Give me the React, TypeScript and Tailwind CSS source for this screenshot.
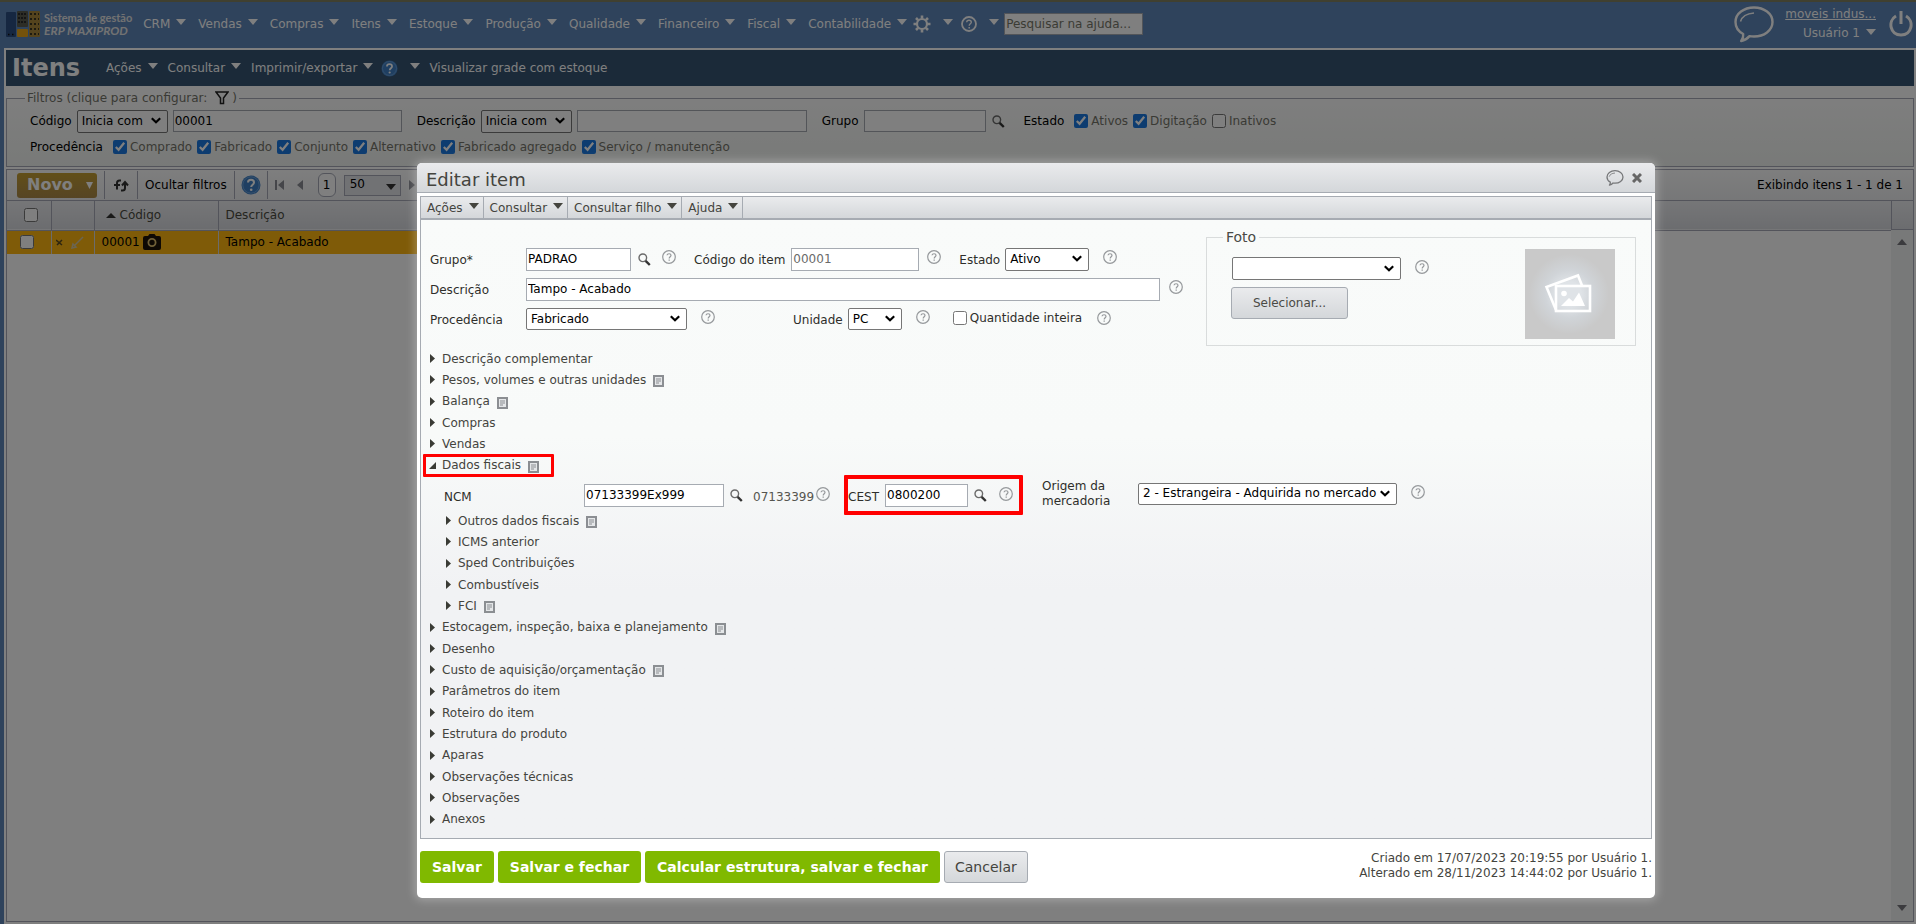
import clsx from 'clsx';

const MENU = [
  'CRM',
  'Vendas',
  'Compras',
  'Itens',
  'Estoque',
  'Produção',
  'Qualidade',
  'Financeiro',
  'Fiscal',
  'Contabilidade',
];

const ORIGINS = [
  'Comprado',
  'Fabricado',
  'Conjunto',
  'Alternativo',
  'Fabricado agregado',
  'Serviço / manutenção',
];

const SECTIONS = [
  { label: 'Descrição complementar' },
  { label: 'Pesos, volumes e outras unidades', note: true },
  { label: 'Balança', note: true },
  { label: 'Compras' },
  { label: 'Vendas' },
  { label: 'Dados fiscais', note: true, open: true },
];

const MORE_SECTIONS = [
  { label: 'Outros dados fiscais', note: true, sub: true },
  { label: 'ICMS anterior', sub: true },
  { label: 'Sped Contribuições', sub: true },
  { label: 'Combustíveis', sub: true },
  { label: 'FCI', note: true, sub: true },
  { label: 'Estocagem, inspeção, baixa e planejamento', note: true },
  { label: 'Desenho' },
  { label: 'Custo de aquisição/orçamentação', note: true },
  { label: 'Parâmetros do item' },
  { label: 'Roteiro do item' },
  { label: 'Estrutura do produto' },
  { label: 'Aparas' },
  { label: 'Observações técnicas' },
  { label: 'Observações' },
  { label: 'Anexos' },
];

const inputClass =
  'bg-white border border-[#a6abb2] px-[1px] pb-[1px] text-black';

function Caret({ className = '' }) {
  return (
    <svg
      viewBox="0 0 10 6"
      className={clsx('w-[10px] h-[6px] shrink-0 mb-1', className)}
      fill="currentColor"
    >
      <path d="M0 0h10L5 6z" />
    </svg>
  );
}

function Search({ className = '' }) {
  return (
    <svg
      viewBox="0 0 13 13"
      className={clsx('w-[13px] h-[13px] shrink-0', className)}
      fill="none"
    >
      <circle cx="4.8" cy="4.8" r="3.8" stroke="#6a6a6a" strokeWidth="1.4" />
      <path d="M7.6 7.8l4.2 4.2" stroke="#333" strokeWidth="2.4" />
    </svg>
  );
}

function Help({ className = '' }) {
  return (
    <svg
      viewBox="0 0 14 14"
      className={clsx('w-[14px] h-[14px] shrink-0', className)}
      fill="none"
      stroke="#96999c"
    >
      <circle cx="7" cy="7" r="6.3" strokeWidth="1.2" />
      <path d="M5 5.3C5.2 3.2 9 3.2 9 5.3 9 6.7 7.2 6.8 7.2 8.5" strokeWidth="1.2" />
      <path d="M7.2 9.6v1.2" strokeWidth="1.3" />
    </svg>
  );
}

function BlueHelp({ className = '' }) {
  return (
    <svg viewBox="0 0 20 20" className={clsx('shrink-0', className)}>
      <circle cx="10" cy="10" r="9.5" fill="#3f7fc4" />
      <circle cx="10" cy="10" r="8.2" fill="none" stroke="#6fa3da" />
      <path
        d="M7 7.6C7 3.9 13 4 13 7.5c0 2.3-2.8 2.2-2.8 4.6"
        fill="none"
        stroke="#fff"
        strokeWidth="2"
      />
      <circle cx="10.2" cy="14.7" r="1.3" fill="#fff" />
    </svg>
  );
}

function Bubble({ className = '', stroke = 1.6 }) {
  return (
    <svg
      viewBox="0 0 40 37"
      className={clsx('shrink-0', className)}
      fill="none"
      stroke="currentColor"
      strokeWidth={stroke}
      strokeLinejoin="round"
    >
      <path d="M20 1.5C30 1.5 38.5 7.5 38.5 16S30 30.5 20 30.5c-1.5 0-3-.1-4.5-.4C13 33 10 34.5 7.2 35c1.5-2 2.3-4.5 2-7C4.5 25.5 1.5 21 1.5 16 1.5 7.5 10 1.5 20 1.5z" />
      <path d="M6.5 15.5C8 10.5 13 7.5 20 7" strokeWidth={stroke * 0.65} />
    </svg>
  );
}

function Note() {
  return (
    <svg
      viewBox="0 0 11 12"
      className="w-[11px] h-[12px] ml-[7px] mt-[3px] shrink-0"
      fill="#e4e6e8"
      stroke="#8b8e92"
    >
      <rect x="1" y="1" width="9" height="10" strokeWidth="2" />
      <path d="M3 4h5M3 6h5M3 8h3" strokeWidth="1" />
    </svg>
  );
}

function Logo() {
  return (
    <svg viewBox="0 0 34 26" className="w-[34px] h-[26px] shrink-0">
      <rect x="0" y="1" width="10" height="25" rx="1" fill="#2c4f82" />
      <path d="M2 23.5h1.5M6 23.5h1.5" stroke="#111" strokeWidth="1.5" />
      <rect x="11" y="0" width="11" height="16" rx="1" fill="#5a5a4c" />
      <path
        d="M12 3h9M12 7h9M12 11h9"
        stroke="#2b2b2b"
        strokeWidth="2"
        strokeDasharray="2 1"
      />
      <rect x="11" y="18" width="11" height="8" rx="1" fill="#e8a516" />
      <rect x="23" y="0" width="11" height="26" rx="1" fill="#a8873a" />
      <path
        d="M24 3h9M24 8h9M24 13h9M24 18h9M24 23h9"
        stroke="#3b3420"
        strokeWidth="2"
        strokeDasharray="2 2"
      />
    </svg>
  );
}

function Select({ id = undefined, label = undefined, option = '', className = '' }) {
  return (
    <span className={clsx('relative block shrink-0', className)}>
      <select
        id={id}
        aria-label={label}
        className="appearance-none block w-full h-full bg-white border border-[#767676] rounded-[2px] pl-[4px] pr-[17px] pb-[1px] text-black"
      >
        <option>{option}</option>
      </select>
      <svg
        viewBox="0 0 10 7"
        className="absolute right-[7px] top-1/2 -mt-[4px] w-[10px] h-[7px] pointer-events-none"
        fill="none"
        stroke="#000"
        strokeWidth="2.2"
      >
        <path d="M.8 1.2L5 5.200l4.200-4" />
      </svg>
    </span>
  );
}

function Check({ id, label, checked = false, className = '' }) {
  return (
    <span className={clsx('flex items-center', className)}>
      <input
        id={id}
        type="checkbox"
        defaultChecked={checked}
        className="w-[14px] h-[14px] mr-[3px] accent-[#1a78e0]"
      />
      <label htmlFor={id}>{label}</label>
    </span>
  );
}

function TopBar() {
  return (
    <header className="h-[46px] flex items-center pb-[2px] pl-[6px] pr-[3px] text-white">
      <Logo />
      <div className="ml-[4px] font-['Lato',sans-serif] font-bold leading-[13px] whitespace-nowrap text-[#e4e4e4]">
        <div className="text-[11px]">Sistema de gestão</div>
        <div className="text-[12px] italic">ERP MAXIPROD</div>
      </div>
      <nav className="flex items-center gap-[12px] ml-[11px]">
        {MENU.map((name) => (
          <button key={name} type="button" className="flex items-center gap-[6px]">
            {name} <Caret />
          </button>
        ))}
      </nav>
      <button type="button" aria-label="Configurações" className="flex items-center gap-[12px] ml-[6px]">
        <svg viewBox="0 0 18 18" className="w-[18px] h-[18px]" fill="none" stroke="#fff">
          <circle cx="9" cy="9" r="5" strokeWidth="2.2" />
          <path
            d="M9 .5v3M9 14.5v3M.5 9h3M14.5 9h3M3 3l2.1 2.1M12.9 12.9L15 15M15 3l-2.1 2.1M5.1 12.9L3 15"
            strokeWidth="2.6"
          />
        </svg>
        <Caret />
      </button>
      <button type="button" aria-label="Ajuda" className="flex items-center gap-[12px] ml-[8px]">
        <svg viewBox="0 0 16 16" className="w-[16px] h-[16px]" fill="none" stroke="#fff">
          <circle cx="8" cy="8" r="7" strokeWidth="1.8" />
          <path d="M5.7 6.2C5.8 3.5 10.3 3.6 10.3 6.2 10.3 7.8 8.2 7.9 8.2 9.8" strokeWidth="1.4" />
          <path d="M8.2 11v1.5" strokeWidth="1.5" />
        </svg>
        <Caret />
      </button>
      <input
        aria-label="Pesquisar na ajuda"
        placeholder="Pesquisar na ajuda..."
        className="ml-[5px] w-[139px] h-[22px] bg-white border border-[#a6abb2] px-[1px] placeholder:text-[#77776a]"
      />
      <div className="ml-auto flex items-center">
        <Bubble className="w-[40px] h-[37px]" stroke={2.4} />
        <div className="ml-[11px] text-right leading-[19px]">
          <a href="#empresa" className="underline block">
            moveis indus...
          </a>
          <button type="button" className="inline-flex items-center gap-[6px]">
            Usuário 1 <Caret />
          </button>
        </div>
        <button type="button" aria-label="Sair" className="ml-[13px]">
          <svg viewBox="0 0 24 26" className="w-[24px] h-[26px]" fill="none" stroke="#fff" strokeWidth="3">
            <path d="M12 0v13" />
            <path d="M7 5C-1.5 10 1 24 12 24s13.5-14 5-19" />
          </svg>
        </button>
      </div>
    </header>
  );
}

function TitleBar() {
  return (
    <div className="h-[36px] bg-[#365472] text-white flex items-center pl-[6px]">
      <h1 className="text-[24px] font-bold w-[94px]">Itens</h1>
      <nav className="flex items-center gap-[10px]">
        {['Ações', 'Consultar', 'Imprimir/exportar'].map((name) => (
          <button key={name} type="button" className="flex items-center gap-[6px]">
            {name} <Caret />
          </button>
        ))}
      </nav>
      <button type="button" aria-label="Ajuda" className="flex items-center gap-[12px] ml-[8px] mr-[9px]">
        <BlueHelp className="w-[17px] h-[17px]" />
        <Caret />
      </button>
      <a href="#estoque">Visualizar grade com estoque</a>
    </div>
  );
}

function Filters() {
  return (
    <fieldset className="mt-[4px] border border-[#a6a9b6] pl-[23px] pt-[2px] pb-[6px] bg-linear-to-b from-[#fdfdfd] to-[#f1f4f1] text-[#74746a]">
      <legend className="-ml-[5px] h-[16px] px-[2px] flex items-center">
        Filtros (clique para configurar:
        <svg viewBox="0 0 14 14" className="w-[14px] h-[14px] ml-[8px] mr-[3px]" fill="none" stroke="#222" strokeWidth="1.5">
          <path d="M1 1h12L8.5 7v5.5h-3V7z" />
        </svg>
        )
      </legend>
      <div className="h-[26px] flex items-center">
        <label htmlFor="codigo" className="text-black">Código</label>
        <Select label="Operador do código" option="Inicia com" className="ml-[5px] w-[91px] h-[23px]" />
        <input id="codigo" defaultValue="00001" className={clsx(inputClass, 'ml-[5px] w-[229px] h-[22px]')} />
        <label htmlFor="descricao" className="text-black ml-[15px]">Descrição</label>
        <Select label="Operador da descrição" option="Inicia com" className="ml-[5px] w-[91px] h-[23px]" />
        <input id="descricao" className={clsx(inputClass, 'ml-[5px] w-[230px] h-[22px]')} />
        <label htmlFor="grupo" className="text-black ml-[15px]">Grupo</label>
        <input id="grupo" className={clsx(inputClass, 'ml-[6px] w-[122px] h-[22px]')} />
        <Search className="ml-[6px]" />
        <span className="text-black ml-[18px] mr-[10px]">Estado</span>
        <div className="flex gap-[5px]">
          <Check id="ativos" label="Ativos" checked />
          <Check id="digitacao" label="Digitação" checked />
          <Check id="inativos" label="Inativos" />
        </div>
      </div>
      <div className="h-[26px] flex items-center gap-[5px]">
        <span className="text-black mr-[5px]">Procedência</span>
        {ORIGINS.map((name) => (
          <Check key={name} id={`origem-${name}`} label={name} checked />
        ))}
      </div>
    </fieldset>
  );
}

function Grid() {
  return (
    <section className="mt-[2px] flex-1 flex flex-col border border-[#a6a9b6]">
      <div className="h-[31px] flex items-center pl-[10px] pr-[10px] border-b border-[#a6a9b6] bg-linear-to-b from-[#fdfdfd] to-[#eeeff1]">
        <button
          type="button"
          className="w-[80px] h-[25px] rounded-[3px] bg-linear-to-b from-[#c49e30] to-[#ac8a48] text-white text-[16px] font-bold flex items-center pl-[10px] gap-[13px]"
        >
          Novo
          <svg viewBox="0 0 7 7" className="w-[7px] h-[7px]" fill="currentColor">
            <path d="M0 0h7L3.5 7z" />
          </svg>
        </button>
        <div className="h-[28px] ml-[7px] px-[8px] border-x border-[#a6a9b6] flex items-center">
          <button type="button" aria-label="Atualizar">
            <svg viewBox="0 0 16 13" className="w-[16px] h-[13px] block" fill="none" stroke="#333" strokeWidth="2">
              <path d="M8 1.500H6.500Q4 1.500 4 4v6.500" />
              <path d="M8 11.500h1.500Q12 11.500 12 9V3.500" />
              <path d="M1 6h6M9 6.500l3-3.500 3 3.500" />
            </svg>
          </button>
        </div>
        <button type="button" className="px-[7px] text-black">Ocultar filtros</button>
        <div className="h-[28px] px-[6px] border-x border-[#a6a9b6] flex items-center">
          <BlueHelp className="w-[20px] h-[20px]" />
        </div>
        <div className="flex items-center ml-[7px] text-[#8a8d94]">
          <svg viewBox="0 0 9 10" className="w-[9px] h-[10px]" fill="currentColor">
            <path d="M0 0h2v10H0zM9 0v10L3 5z" />
          </svg>
          <svg viewBox="0 0 6 10" className="w-[6px] h-[10px] ml-[13px]" fill="currentColor">
            <path d="M6 0v10L0 5z" />
          </svg>
          <span className="ml-[15px] w-[18px] h-[24px] rounded-[6px] border border-[#a6a9b6] bg-white text-black flex items-center justify-center">
            1
          </span>
          <span className="relative ml-[8px]">
            <select aria-label="Itens por página" className="appearance-none w-[57px] h-[21px] pl-[5px] pb-[2px] bg-[#e3e4e8] border border-[#a6a9b6] text-black block">
              <option>50</option>
            </select>
            <Caret className="absolute right-[5px] top-[9px] text-[#333]" />
          </span>
          <svg viewBox="0 0 6 10" className="w-[6px] h-[10px] ml-[8px]" fill="currentColor">
            <path d="M0 0v10l6-5z" />
          </svg>
        </div>
        <span className="ml-auto text-black">Exibindo itens 1 - 1 de 1</span>
      </div>
      <div className="flex-1 flex">
        <div className="flex-1">
          <table className="w-full table-fixed border-collapse text-left">
            <colgroup>
              <col className="w-[44px]" />
              <col className="w-[43px]" />
              <col className="w-[124px]" />
              <col className="w-[700px]" />
              <col />
            </colgroup>
            <thead>
              <tr className="h-[29px] bg-linear-to-b from-[#ecedf0] to-[#d8dadf] text-[#4a4a40] border-b border-[#a6a9b6]">
                <th className="font-normal border-r border-[#a6a9b6]">
                  <input type="checkbox" aria-label="Selecionar todos" className="block w-[14px] h-[14px] ml-[17px]" />
                </th>
                <th className="border-r border-[#a6a9b6]" />
                <th className="font-normal border-r border-[#a6a9b6] pl-[11px]">
                  <svg viewBox="0 0 10 5" className="inline w-[10px] h-[5px] mr-[4px]" fill="#333">
                    <path d="M0 5h10L5 0z" />
                  </svg>
                  Código
                </th>
                <th className="font-normal pl-[7px]">Descrição</th>
                <th />
              </tr>
            </thead>
            <tbody>
              <tr className="h-[24px] text-black">
                <td className="bg-[#ffb710] border-r border-[#d8d8d8]">
                  <input type="checkbox" aria-label="Selecionar 00001" className="block w-[14px] h-[14px] ml-[13px]" />
                </td>
                <td className="bg-[#ffb710] border-r border-[#d8d8d8]">
                  <div className="flex items-center gap-[8px] pl-[4px]">
                    <svg viewBox="0 0 7 7" className="w-[7px] h-[7px]" stroke="#5a4a20" strokeWidth="1.500">
                      <path d="M0 1l6 5M6 1L1 6" />
                    </svg>
                    <svg viewBox="0 0 13 13" className="w-[13px] h-[13px]" fill="none" stroke="#d6cba6" strokeWidth="1.500">
                      <path d="M12 1L4 9M1 12l1-4 3 3z" />
                    </svg>
                  </div>
                </td>
                <td className="bg-[#ffb710] border-r border-[#d8d8d8]">
                  <div className="flex items-center pl-[7px]">
                    00001
                    <svg viewBox="0 0 18 16" className="w-[18px] h-[16px] ml-[3px]">
                      <path d="M5 2l1.500-2h5L13 2h3q2 0 2 2v10q0 2-2 2H2q-2 0-2-2V4q0-2 2-2z" fill="#1c1208" />
                      <circle cx="9" cy="8.500" r="3.600" fill="none" stroke="#e0c070" strokeWidth="1.800" />
                    </svg>
                  </div>
                </td>
                <td className="bg-[#ffb710] pl-[7px]">Tampo - Acabado</td>
                <td />
              </tr>
            </tbody>
          </table>
        </div>
        <div className="w-[22px] flex flex-col text-[#77777c]">
          <div className="h-[29px] border-l border-b border-[#a6a9b6] bg-linear-to-b from-[#ecedf0] to-[#d8dadf]" />
          <div className="flex-1 flex flex-col justify-between items-center bg-[#f0f2f2] pt-[9px] pb-[6px]">
            <Caret className="rotate-180" />
            <Caret />
          </div>
        </div>
      </div>
    </section>
  );
}

function Section({ label, note = false, open = false, sub = false }) {
  return (
    <li className="h-[21px] nth-[3n]:h-[22px] flex items-center">
      <button
        type="button"
        aria-expanded={open}
        className={clsx('relative flex items-center h-[21px]', sub ? 'pl-[25px]' : 'pl-[9px]')}
      >
        {open ? (
          <svg viewBox="0 0 7 7" className="w-[7px] h-[7px] -ml-[1px] mr-[6px]" fill="#3a3b35">
            <path d="M7 0v7H0z" />
          </svg>
        ) : (
          <svg viewBox="0 0 5 9" className="w-[5px] h-[9px] mr-[7px]" fill="#3a3b35">
            <path d="M0 0l5 4.500L0 9z" />
          </svg>
        )}
        {label}
        {note && <Note />}
        {open && (
          <span className="absolute left-[2px] -right-[15px] -top-[1px] h-[23px] border-[3px] border-[#ff0000] rounded-[1px]" />
        )}
      </button>
    </li>
  );
}

function MainFields() {
  return (
    <div className="pl-[9px] pt-[24px] text-[#2e2e2a]">
      <div className="h-[30px] flex items-center">
        <label htmlFor="item-grupo" className="w-[96px] mt-[2px]">Grupo*</label>
        <input id="item-grupo" defaultValue="PADRAO" className={clsx(inputClass, 'w-[105px] h-[23px]')} />
        <Search className="ml-[7px]" />
        <Help className="ml-[11px] mb-1" />
        <label htmlFor="item-codigo" className="ml-[18px] mt-[2px]">Código do item</label>
        <input
          id="item-codigo"
          defaultValue="00001"
          readOnly
          className="bg-white border border-[#a6abb2] px-[1px] pb-[1px] text-[#6a6a6a] ml-[6px] w-[128px] h-[23px]"
        />
        <Help className="ml-[8px] mb-1" />
        <label htmlFor="item-estado" className="ml-[18px] mt-[2px]">Estado</label>
        <Select id="item-estado" option="Ativo" className="ml-[5px] w-[84px] h-[23px]" />
        <Help className="ml-[14px] mb-1" />
      </div>
      <div className="h-[30px] flex items-center">
        <label htmlFor="item-descricao" className="w-[96px] mt-[2px]">Descrição</label>
        <input id="item-descricao" defaultValue="Tampo - Acabado" className={clsx(inputClass, 'w-[634px] h-[23px]')} />
        <Help className="ml-[9px] mb-1" />
      </div>
      <div className="h-[30px] flex items-center">
        <label htmlFor="item-procedencia" className="w-[96px] mt-[2px]">Procedência</label>
        <Select id="item-procedencia" option="Fabricado" className="w-[161px] h-[22px]" />
        <Help className="ml-[14px] mb-1" />
        <label htmlFor="item-unidade" className="ml-[78px] mt-[2px]">Unidade</label>
        <Select id="item-unidade" option="PC" className="ml-[5px] w-[54px] h-[22px]" />
        <Help className="ml-[14px] mb-1" />
        <Check id="inteira" label="Quantidade inteira" className="ml-[23px] mb-[2px]" />
        <Help className="ml-[15px] mb-[2px]" />
      </div>
    </div>
  );
}

function Photo() {
  return (
    <fieldset className="mt-[9px] mr-[15px] w-[430px] h-[117px] border border-[#d9dcdc] pl-[24px]">
      <legend className="-ml-[8px] px-[3px] text-[14px] leading-[16px] text-[#4a4a45]">Foto</legend>
      <div className="flex justify-between pr-[20px] pt-[4px]">
        <div>
          <div className="flex items-center pt-[8px]">
            <Select label="Foto" className="ml-[1px] w-[169px] h-[23px]" />
            <Help className="ml-[14px] mb-1" />
          </div>
          <button
            type="button"
            className="mt-[7px] w-[117px] h-[32px] rounded-[3px] border border-[#a6abb2] bg-linear-to-b from-[#eaebed] to-[#d4d7da] text-[#4a4a45]"
          >
            Selecionar...
          </button>
        </div>
        <svg viewBox="0 0 90 90" className="w-[90px] h-[90px]">
          <defs>
            <radialGradient id="glow">
              <stop offset="0.3" stopColor="#dfe3e7" />
              <stop offset="0.6" stopColor="#d0d4d8" />
              <stop offset="1" stopColor="#c9c9c9" />
            </radialGradient>
          </defs>
          <rect width="90" height="90" fill="#c9c9c9" />
          <circle cx="44" cy="45" r="40" fill="url(#glow)" />
          <g fill="none" stroke="#fff" strokeWidth="2.6">
            <path d="M31 61L21.5 38 53 26.5l4 10" />
            <rect x="31" y="37" width="34" height="25" />
          </g>
          <g fill="#fff">
            <circle cx="39" cy="44.5" r="2.8" />
            <path d="M36 57l8-8 4 3.5 6-9 6 13.5z" />
          </g>
        </svg>
      </div>
    </fieldset>
  );
}

function FiscalFields() {
  return (
    <div className="mt-[1px] h-[33px] flex items-center pl-[23px] text-[#2e2e2a]">
      <label htmlFor="ncm" className="w-[140px] mt-[6px]">NCM</label>
      <input id="ncm" defaultValue="07133399Ex999" className={clsx(inputClass, 'w-[140px] h-[23px] mt-[4px]')} />
      <Search className="ml-[6px] mt-[4px]" />
      <span className="ml-[10px] mt-[6px] text-[#55554f]">07133399</span>
      <Help className="ml-[2px]" />
      <div className="relative flex items-center ml-[18px]">
        <label htmlFor="cest" className="mt-[6px]">CEST</label>
        <input id="cest" defaultValue="0800200" className={clsx(inputClass, 'ml-[6px] w-[83px] h-[23px] mt-[4px]')} />
        <Search className="ml-[6px] mt-[4px]" />
        <Help className="ml-[12px]" />
        <span className="absolute -left-[4px] -right-[10px] -top-[5px] h-[40px] border-[4px] border-[#ff0000] rounded-[1px] pointer-events-none" />
      </div>
      <label htmlFor="origem" className="ml-[29px] w-[96px] leading-[15px]">
        Origem da mercadoria
      </label>
      <Select
        id="origem"
        option="2 - Estrangeira - Adquirida no mercado interno"
        className="w-[259px] h-[22px]"
      />
      <Help className="ml-[14px] mb-1" />
    </div>
  );
}

const greenButton =
  'h-[32px] px-[12px] rounded-[3px] bg-[#80b900] text-white text-[14px] font-bold';

function EditDialog() {
  return (
    <div
      role="dialog"
      aria-label="Editar item"
      className="w-full rounded-[5px] bg-white text-[#44443e] shadow-[0_0_10px_2px_rgba(255,255,255,0.3)]"
    >
      <div className="h-[30px] rounded-t-[5px] border-b border-[#a6abb2] bg-linear-to-b from-[#eaebed] to-[#d4d7da] flex items-center pl-[9px] pr-[13px]">
        <h2 className="text-[18px] mt-[5px]">Editar item</h2>
        <Bubble className="w-[18px] h-[16px] ml-auto text-[#77787a]" stroke={3} />
        <button type="button" aria-label="Fechar" className="ml-[8px]">
          <svg viewBox="0 0 10 10" className="w-[10px] h-[10px] block" stroke="#666" strokeWidth="3">
            <path d="M1 1l8 8M9 1L1 9" />
          </svg>
        </button>
      </div>
      <div className="mt-[3px] mx-[3px] border border-[#a6abb2]">
        <div className="h-[23px] flex bg-linear-to-b from-[#eaebed] to-[#d4d7da] border-b-2 border-[#a6abb2]">
          {['Ações', 'Consultar', 'Consultar filho', 'Ajuda'].map((name) => (
            <button
              key={name}
              type="button"
              className="flex items-center gap-[6px] pl-[6px] pr-[4px] border-r border-[#a6abb2]"
            >
              {name} <Caret />
            </button>
          ))}
        </div>
        <div className="bg-linear-to-b from-[#f9fbfa] via-[#f8faf9] via-35% to-[#f1f2f4] to-60% pb-[8px]">
          <div className="flex justify-between items-start">
            <MainFields />
            <Photo />
          </div>
          <ul className="mt-[2px]">
            {SECTIONS.map((section) => (
              <Section key={section.label} {...section} />
            ))}
          </ul>
          <FiscalFields />
          <ul>
            {MORE_SECTIONS.map((section) => (
              <Section key={section.label} {...section} />
            ))}
          </ul>
        </div>
      </div>
      <div className="flex items-start pt-[12px] pb-[15px] px-[3px] gap-[4px]">
        <button type="button" className={greenButton}>Salvar</button>
        <button type="button" className={greenButton}>Salvar e fechar</button>
        <button type="button" className={greenButton}>Calcular estrutura, salvar e fechar</button>
        <button
          type="button"
          className="h-[32px] px-[10px] rounded-[3px] border border-[#a6abb2] bg-linear-to-b from-[#eaebed] to-[#d4d7da] text-[14px]"
        >
          Cancelar
        </button>
        <div className="ml-auto text-right leading-[15px]">
          <p>Criado em 17/07/2023 20:19:55 por Usuário 1.</p>
          <p>Alterado em 28/11/2023 14:44:02 por Usuário 1.</p>
        </div>
      </div>
    </div>
  );
}

export default function App() {
  return (
    <div className="min-h-screen flex flex-col bg-[#5e86b8] border-t-2 border-[#808060] text-[12px] leading-[16px] font-['DejaVu_Sans',Verdana,sans-serif]">
      <TopBar />
      <main className="flex-1 flex flex-col ml-[4px] pl-[2px] pr-[2px] pt-[2px] pb-[2px] bg-white">
        <TitleBar />
        <Filters />
        <Grid />
      </main>
      <div className="absolute inset-0 bg-black/50 pt-[163px] pl-[417px] pr-[261px]">
        <EditDialog />
      </div>
    </div>
  );
}
